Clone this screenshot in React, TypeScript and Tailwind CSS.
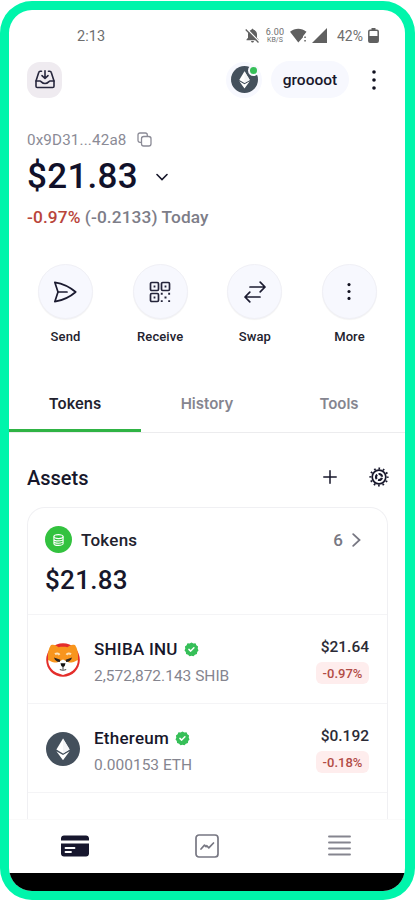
import type { ReactNode } from 'react';

type Asset = {
  name: string;
  nameClass: string;
  balance: string;
  price: string;
  change: string;
  icon: ReactNode;
};

function EthMark({ className }: { className: string }) {
  return (
    <svg className={className} viewBox="0 0 34 34">
      <circle cx="17" cy="17" r="17" fill="#44505c" />
      <path d="M17 6.5 10.4 17.6 17 21.4l6.600-3.800z" fill="#fff" />
      <path d="M17 6.5v14.9l6.600-3.800z" fill="#f3f4f6" />
      <path d="m10.400 19.200 6.600 3.700 6.600-3.700L17 28.200z" fill="#fff" />
    </svg>
  );
}

function ShibaMark() {
  return (
    <svg className="h-[34px] w-[34px]" viewBox="0 0 34 34">
      <circle cx="17" cy="17" r="16.8" fill="#e42d2b" />
      <path d="M4.800 2.200C7 1.200 10 1.800 12.500 4.300c3-.6 6-.6 9 0C24 1.800 27 1.200 29.200 2.200c2.300 3.500 3.200 8.500 2.800 12.700.3 5.500-3.300 10.500-8.300 12.800L17 30.500l-6.700-2.800C5.300 25.400 1.700 20.400 2 14.900c-.4-4.200.5-9.200 2.800-12.700z" fill="#f8951d" />
      <path d="M2.300 17c2.500 1.600 5 2.600 8.700 2.600l6-3 6 3c3.700 0 6.200-1 8.700-2.600.2 6-3.500 10.500-8.300 12.700L17 32l-6.400-2.300C5.800 27.500 2.100 23 2.300 17z" fill="#fff" />
      <path d="M9 11.300c1.500-1.200 3.500-1 4.500.6M25 11.300c-1.500-1.200-3.500-1-4.500.6" stroke="#fde2b8" strokeWidth="2" fill="none" />
      <path d="m8 14.600 6.400 2.200-.6 2.200c-2.700.1-4.900-1.300-5.800-4.400zM26 14.600l-6.400 2.200.6 2.200c2.700.1 4.900-1.300 5.800-4.400z" fill="#2b2420" />
      <path d="M14.500 20.200h5l-.8 2.900L17 24.300l-1.700-1.200z" fill="#111" />
      <path d="M13.800 26.500c2 .9 4.400.9 6.400 0M17 24v2.500" stroke="#555" strokeWidth="1.100" fill="none" />
    </svg>
  );
}

function Verified() {
  return (
    <svg className="-mt-px h-[15px] w-[15px] shrink-0" viewBox="0 0 15 15">
      <path
        d="M7.500.5 9.400 1.400l2.100-.1.900 1.900 1.700 1.200-.4 2.100.8 1.900-1.300 1.600-.3 2.100-2 .7-1.400 1.500-2-.6-2 .6-1.400-1.500-2-.7-.3-2.100L.5 8.400l.8-1.900-.4-2.100 1.700-1.200.9-1.900 2.100.1z"
        fill="#36bf58"
      />
      <path d="m4.900 7.400 1.800 1.700L9.900 5.800" stroke="#fff" strokeWidth="1.500" fill="none" strokeLinecap="round" strokeLinejoin="round" />
    </svg>
  );
}

function Dots({ className }: { className: string }) {
  return (
    <svg className={className} viewBox="0 0 6 22" fill="#11111f">
      <circle cx="3" cy="3" r="1.800" />
      <circle cx="3" cy="11" r="1.800" />
      <circle cx="3" cy="19" r="1.800" />
    </svg>
  );
}

function SendIcon() {
  return (
    <svg className="-ml-px h-6 w-6" viewBox="0 0 24 24" fill="none" stroke="#1b1b30" strokeWidth="1.700" strokeLinejoin="round" strokeLinecap="round">
      <path d="M1.800 2.300c8 1.300 15 4.600 20.900 9.700C16.800 17.100 9.800 20.400 1.800 21.700L5 12z" />
      <path d="M5 12h9" />
    </svg>
  );
}

function QrIcon() {
  return (
    <svg className="h-[22px] w-[22px]" viewBox="0 0 22 22" fill="none" stroke="#24243a" strokeWidth="1.700">
      <rect x="1.500" y="1.500" width="8" height="8" rx="1.200" />
      <rect x="12.500" y="1.500" width="8" height="8" rx="1.200" />
      <rect x="1.500" y="12.500" width="8" height="8" rx="1.200" />
      <path
        d="M4.600 4.600h1.800v1.800H4.600zM15.600 4.600h1.800v1.800h-1.800zM4.600 15.600h1.800v1.800H4.600zM11.800 11.800h1.900v1.900h-1.900zM19.200 11.800h1.900v1.900h-1.900zM15.500 15.500h2v2h-2zM11.800 19.200h1.900v1.900h-1.900zM19.200 19.200h1.900v1.900h-1.900z"
        fill="#24243a"
        stroke="none"
      />
    </svg>
  );
}

function SwapIcon() {
  return (
    <svg className="h-[22px] w-[22px]" viewBox="0 0 22 22" fill="none" stroke="#1b1b30" strokeWidth="1.700" strokeLinecap="round" strokeLinejoin="round">
      <path d="M6 6h15M16.200 1.200 21 6l-4.800 4.800M16 16H1M5.800 11.200 1 16l4.800 4.800" />
    </svg>
  );
}

function GearIcon() {
  return (
    <svg className="h-5 w-5" viewBox="0 0 20 20" fill="none" stroke="#17172b">
      <circle cx="10" cy="10" r="6.800" strokeWidth="1.700" />
      <circle cx="10" cy="10" r="8.600" strokeWidth="2" strokeDasharray="1.700 2.803" strokeDashoffset="0.850" />
      <circle cx="10" cy="10" r="3" strokeWidth="2.200" strokeDasharray="4.783 1.500" strokeDashoffset="-0.750" />
    </svg>
  );
}

const actions = [
  { label: 'Send', icon: <SendIcon /> },
  { label: 'Receive', icon: <QrIcon /> },
  { label: 'Swap', icon: <SwapIcon /> },
  { label: 'More', icon: <Dots className="h-[19px] w-[6px]" /> },
];

const assets: Asset[] = [
  {
    name: 'SHIBA INU',
    nameClass: 'tracking-[0.250px]',
    balance: '2,572,872.143 SHIB',
    price: '$21.64',
    change: '-0.97%',
    icon: <ShibaMark />,
  },
  {
    name: 'Ethereum',
    nameClass: 'tracking-[0.250px]',
    balance: '0.000153 ETH',
    price: '$0.192',
    change: '-0.18%',
    icon: <EthMark className="h-[34px] w-[34px]" />,
  },
];

function StatusBar() {
  return (
    <div className="flex h-[51px] items-center pl-[68px] pr-[26px] text-[#6e6e6e]">
      <span className="pt-[2px] text-[14.500px] tracking-[0.1px]">2:13</span>
      <div className="ml-auto flex items-center">
        <svg className="h-[15px] w-[15px]" viewBox="0 0 15 15">
          <path d="M7.500.8c.7 0 1 .5 1 1 2.300.6 3.500 2.300 3.500 4.500v3.500l1.500 1.700v.7h-12v-.7L3 9.800V6.300c0-2.200 1.200-3.900 3.500-4.500 0-.5.3-1 1-1zM6 13h3c0 .9-.7 1.500-1.500 1.500S6 13.900 6 13z" fill="#606060" />
          <path d="m1.600.8 12.800 13" stroke="#fff" strokeWidth="1.400" />
          <path d="m.7 1.500 12.800 13" stroke="#606060" strokeWidth="1.300" />
        </svg>
        <div className="ml-[5px] w-[20px] text-center">
          <p className="h-[9px] text-[9px] leading-[9px] tracking-[0.2px]">6.00</p>
          <p className="h-[7px] text-[7px] leading-[7px]">KB/S</p>
        </div>
        <svg className="ml-[5px] h-[15px] w-[18px]" viewBox="0 0 18 15" fill="#606060">
          <path d="M0 3.800C5-.4 11.500-.4 16.500 3.800L13 8.200V9.300l-4.700 5.200z" />
          <path d="M14.300 8.500h1.500V10h-1.500zM14.300 12h1.500v1.500h-1.500z" />
        </svg>
        <svg className="ml-[4px] h-[15px] w-[15px]" viewBox="0 0 15 15">
          <path d="M15 0v15H0z" fill="#606060" />
        </svg>
        <span className="ml-[10px] pt-[2px] text-[14px]">42%</span>
        <svg className="ml-[5px] h-[15px] w-[11px]" viewBox="0 0 11 15">
          <path d="M3.500 0h4v2h-4z" fill="#606060" />
          <rect x=".8" y="2.200" width="9.400" height="12" rx="1.200" fill="none" stroke="#606060" strokeWidth="1.500" />
          <path d="M1 8h9v6H1z" fill="#606060" />
        </svg>
      </div>
    </div>
  );
}

function Header() {
  return (
    <div className="flex h-[37px] items-center pl-[18px] pr-[28px]">
      <div className="flex h-9 w-[35px] items-center justify-center rounded-[13px] bg-[#efebf0]">
        <svg className="h-[19px] w-[20px]" viewBox="0 0 20 19" fill="none" stroke="#26263c" strokeWidth="1.600" strokeLinecap="round" strokeLinejoin="round">
          <path d="M6.500 1.300H5.200c-.7 0-1.200.3-1.400 1L1 11v5.200c0 .8.500 1.300 1.300 1.300h15.400c.8 0 1.300-.5 1.300-1.300V11l-2.800-8.700c-.2-.7-.7-1-1.400-1h-1.300" />
          <path d="M1 11h4c1.300 0 1.700 2.500 5 2.500s3.700-2.500 5-2.500h4M10 .8v7.400M7 5.600l3 2.900 3-2.900" />
        </svg>
      </div>
      <div className="relative ml-auto flex h-9 w-9 items-center justify-center rounded-full bg-[#f7f8fe]">
        <EthMark className="h-[27px] w-[27px]" />
        <span className="absolute right-[3px] top-[3px] h-[11px] w-[11px] rounded-full border-2 border-[#f7f8fe] bg-[#36bf58]" />
      </div>
      <div className="ml-[9px] flex h-[37px] w-[78px] items-center justify-center rounded-full bg-[#f7f8fe] pt-[2px] text-[15.500px] font-medium text-[#17172b]">
        groooot
      </div>
      <Dots className="ml-[22px] h-[22px] w-[6px]" />
    </div>
  );
}

function Balance() {
  return (
    <div className="pl-[18px] pt-[31px]">
      <div className="flex h-[22px] items-center text-[#8b8b96]">
        <span className="w-[110px] text-[15.200px] tracking-[0.150px]">0x9D31...42a8</span>
        <svg className="-mt-[2px] h-[15px] w-[15px]" viewBox="0 0 15 15" fill="none" stroke="#8b8b96" strokeWidth="1.300">
          <rect x="4.500" y="4.500" width="9.500" height="9.500" rx="2.200" />
          <path d="M4.300 10.300H3C1.800 10.300 1 9.500 1 8.300V3c0-1.200.8-2 2-2h5.300c1.200 0 2 .8 2 2v1.300" />
        </svg>
      </div>
      <div className="flex h-[52px] items-center">
        <span className="w-[129px] text-[35px] font-medium tracking-[0.300px] text-[#11112a]">$21.83</span>
        <svg className="h-[8px] w-[12px]" viewBox="0 0 12 8" fill="none" stroke="#17172b" strokeWidth="1.600" strokeLinecap="round">
          <path d="m1 1.500 5 5 5-5" />
        </svg>
      </div>
      <p className="flex h-[28px] items-center whitespace-pre pt-[1px] text-[17.300px] font-medium tracking-[0.100px] text-[#7d7d88]">
        <span className="text-[#b9453b]">-0.97%</span> (-0.2133) Today
      </p>
    </div>
  );
}

function AssetRow({ asset }: { asset: Asset }) {
  return (
    <div className="flex h-[89px] shrink-0 border-b border-[#f4f4f6] px-[18px]">
      <div className="pt-[28px]">{asset.icon}</div>
      <div className="ml-[14px] pt-[23px]">
        <div className="flex h-[24px] items-center gap-[6px]">
          <span className={`text-[17px] font-medium text-[#17172b] ${asset.nameClass}`}>{asset.name}</span>
          <Verified />
        </div>
        <p className="mt-[3px] flex h-[24px] items-center text-[15.500px] text-[#85858f]">{asset.balance}</p>
      </div>
      <div className="ml-auto flex flex-col items-end pt-[21px]">
        <span className="text-[15.500px] font-medium leading-[22px] text-[#2b2b36]">{asset.price}</span>
        <span className="mt-[4px] flex h-[22px] w-[53px] items-center justify-center rounded-[6px] bg-[#feeded] pt-px text-[13px] font-medium text-[#b24c46]">
          {asset.change}
        </span>
      </div>
    </div>
  );
}

export default function App() {
  return (
    <div className="h-[900px] w-[415px] bg-white pt-px font-['Roboto',sans-serif]">
      <div className="flex h-[899px] flex-col overflow-hidden rounded-[32px] border-[9px] border-r-[10px] border-[#00f5ab] bg-white">
        <StatusBar />
        <Header />
        <Balance />

        {/* Quick actions */}
        <div className="mt-[33px] flex justify-between pl-[29px] pr-[28px]">
          {actions.map((action) => (
            <div key={action.label} className="flex w-[55px] flex-col items-center">
              <div className="flex h-[55px] w-[55px] items-center justify-center rounded-full border border-[#f0f0f6] bg-[#f7f8fe] shadow-[0_1px_1px_rgba(0,0,0,0.05)]">
                {action.icon}
              </div>
              <span className="mt-[8px] text-[13px] font-medium leading-5 tracking-[0.100px] text-[#22222e]">{action.label}</span>
            </div>
          ))}
        </div>

        {/* Tabs */}
        <div className="mt-[29px] grid h-[57px] shrink-0 grid-cols-3 border-b border-[#ececee] font-['Inter',sans-serif] text-[15px] font-semibold text-[#85858f]">
          <div className="flex items-center justify-center border-b-[3px] border-[#2fb344] pt-[4px] text-[#22222e]">Tokens</div>
          <div className="flex items-center justify-center pb-[3px] pt-[4px]">History</div>
          <div className="flex items-center justify-center pb-[3px] pt-[4px]">Tools</div>
        </div>

        {/* Assets heading */}
        <div className="mt-[30px] flex h-[30px] shrink-0 items-center pl-[18px] pr-[16px]">
          <h2 className="text-[20px] font-medium text-[#17172b]">Assets</h2>
          <svg className="-mt-[2px] ml-auto mr-[32px] h-[14px] w-[14px]" viewBox="0 0 14 14" stroke="#17172b" strokeWidth="1.500" strokeLinecap="round">
            <path d="M7 .8v12.400M.8 7h12.400" />
          </svg>
          <span className="-mt-[2px]">
            <GearIcon />
          </span>
        </div>

        {/* Asset list, cut off by the bottom navigation */}
        <div className="ml-[18px] mr-[17px] mt-[14px] flex min-h-0 flex-1 flex-col overflow-hidden rounded-t-[18px] border-x-[1.500px] border-t-[1.500px] border-[#f0f0f3]">
          <div className="h-[107px] shrink-0 border-b border-[#f4f4f6] px-[17px] pt-[18px]">
            <div className="flex h-[27px] items-center">
              <div className="flex h-[27px] w-[27px] items-center justify-center rounded-full bg-[#33c23f]">
                <svg className="h-[12px] w-[11px]" viewBox="0 0 11 12" fill="none" stroke="#fff" strokeWidth="1.100">
                  <ellipse cx="5.500" cy="2.600" rx="4.600" ry="2" />
                  <path d="M.9 2.600v6.800c0 1.100 2 2 4.600 2s4.600-.9 4.600-2V2.600M.9 4.900c0 1.100 2 2 4.600 2s4.600-.9 4.600-2M.9 7.200c0 1.100 2 2 4.600 2s4.600-.9 4.600-2" />
                </svg>
              </div>
              <span className="ml-[9px] pt-[2px] text-[17px] font-medium tracking-[0.250px] text-[#22222e]">Tokens</span>
              <span className="ml-auto pt-[2px] text-[17px] font-medium text-[#777782]">6</span>
              <svg className="ml-[9px] mr-[9px] h-[14px] w-[9px]" viewBox="0 0 9 14" fill="none" stroke="#777782" strokeWidth="1.800" strokeLinecap="round">
                <path d="m1.200 1.200 6.300 5.800-6.300 5.800" />
              </svg>
            </div>
            <p className="mt-[9px] text-[26px] font-medium leading-[36px] tracking-[0.300px] text-[#17172b]">$21.83</p>
          </div>
          {assets.map((asset) => (
            <AssetRow key={asset.name} asset={asset} />
          ))}
        </div>

        {/* Bottom navigation */}
        <div className="grid h-[54px] shrink-0 grid-cols-3 items-center justify-items-center border-t border-[#fafafa] pb-[2px]">
          <svg className="h-[22px] w-[28px]" viewBox="0 0 28 22">
            <path d="M3 .5h22c1.700 0 3 1.300 3 3V5.500H0V3.500c0-1.700 1.300-3 3-3zM0 8.500h28v10c0 1.700-1.300 3-3 3H3c-1.700 0-3-1.300-3-3z" fill="#17172e" />
            <path d="M4.500 13h9M4.500 17h5.500" stroke="#fff" strokeWidth="1.800" strokeLinecap="round" />
          </svg>
          <svg className="h-6 w-6" viewBox="0 0 24 24" fill="none" stroke="#777782" strokeWidth="1.700" strokeLinecap="round" strokeLinejoin="round">
            <rect x="1" y="1" width="22" height="22" rx="3" />
            <path d="m6 15 3.500-3.800 1.500 1.500.8-1 2 2.200L18.500 9" />
          </svg>
          <svg className="h-[21px] w-[23px]" viewBox="0 0 23 21" stroke="#85858f" strokeWidth="1.900" strokeLinecap="round">
            <path d="M1 1.500h21M1 7.500h21M1 13.500h21M1 19.500h21" />
          </svg>
        </div>
        <div className="h-[18px] shrink-0 bg-black" />
      </div>
    </div>
  );
}
